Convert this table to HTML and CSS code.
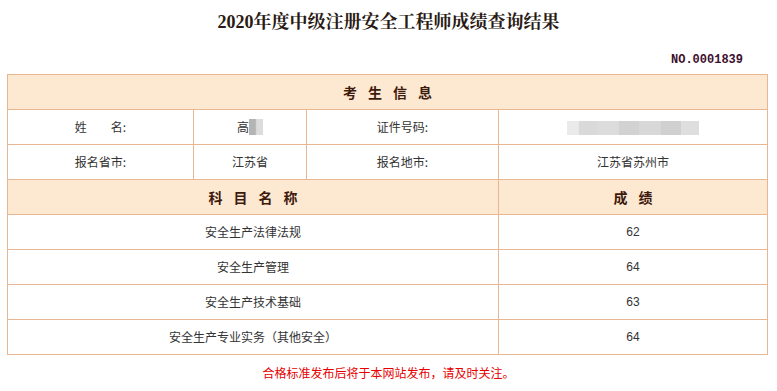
FILE: index.html
```html
<!DOCTYPE html>
<html lang="zh-CN">
<head>
<meta charset="utf-8">
<title>成绩查询结果</title>
<link rel="stylesheet" href="styles.css">
</head>
<body>
<div class="page">
  <h1 class="title">2020年度中级注册安全工程师成绩查询结果</h1>
  <div class="serial">NO.0001839</div>
  <table class="result">
    <colgroup>
      <col class="c1"><col class="c2"><col class="c3"><col class="c4">
    </colgroup>
    <tr class="head"><td colspan="4"><span class="spaced">考生信息</span></td></tr>
    <tr>
      <td><span class="label-name">姓<span class="gap"></span>名:</span></td>
      <td><span class="name">高<span class="blur-name"></span></span></td>
      <td>证件号码:</td>
      <td><span class="blur-id"><i class="b1"></i><i class="b2"></i><i class="b3"></i><i class="b4"></i><i class="b5"></i><i class="b6"></i><i class="b7"></i></span></td>
    </tr>
    <tr>
      <td>报名省市:</td>
      <td>江苏省</td>
      <td>报名地市:</td>
      <td>江苏省苏州市</td>
    </tr>
    <tr class="head">
      <td colspan="3"><span class="spaced">科目名称</span></td>
      <td><span class="spaced">成绩</span></td>
    </tr>
    <tr><td colspan="3">安全生产法律法规</td><td class="num">62</td></tr>
    <tr><td colspan="3">安全生产管理</td><td class="num">64</td></tr>
    <tr><td colspan="3">安全生产技术基础</td><td class="num">63</td></tr>
    <tr><td colspan="3">安全生产专业实务（其他安全）</td><td class="num">64</td></tr>
  </table>
  <p class="notice">合格标准发布后将于本网站发布，请及时关注。</p>
</div>
</body>
</html>
```

FILE: styles.css
```css
html, body {
  margin: 0;
  padding: 0;
  background: #ffffff;
}

.page {
  width: 777px;
  font-family: "Noto Sans CJK SC", "Noto Sans", sans-serif;
  color: #333333;
}

.title {
  margin: 10px 0 0;
  font-family: "Liberation Serif", "Noto Serif CJK SC", "Noto Sans CJK SC", serif;
  font-size: 18px;
  line-height: 24px;
  font-weight: bold;
  text-align: center;
  color: #2a1a14;
}

.serial {
  margin-top: 19px;
  padding-right: 34px;
  text-align: right;
  font-family: "Liberation Mono", monospace;
  font-weight: bold;
  font-size: 12px;
  line-height: 14px;
  color: #3e0f2e;
}

.result {
  margin: 7px 0 0 7px;
  width: 760px;
  border-collapse: collapse;
  table-layout: fixed;
  font-size: 12px;
}

.c1 { width: 186px; }
.c2 { width: 113px; }
.c3 { width: 192px; }
.c4 { width: 269px; }

.result td {
  border: 1px solid #e8b690;
  height: 34px;
  padding: 0;
  text-align: center;
  vertical-align: middle;
  line-height: 16px;
}

.result .head td {
  background: #fde8d2;
  font-size: 14px;
  font-weight: bold;
  color: #3d1a0c;
}

.spaced {
  letter-spacing: 11px;
  padding-left: 11px;
}

.num {
  font-family: "Liberation Sans", "Noto Sans", sans-serif;
  font-size: 12px;
}

.label-name {
  display: inline-flex;
  align-items: center;
}

.gap {
  display: inline-block;
  width: 24px;
}

.name {
  display: inline-flex;
  align-items: center;
}

.blur-name {
  display: inline-block;
  width: 14px;
  height: 16px;
  background: linear-gradient(90deg, #b4b4b4 0, #b4b4b4 45%, #dcdcdc 55%, #dcdcdc 100%);
}

.blur-id {
  display: inline-flex;
  vertical-align: middle;
  height: 14px;
}

.blur-id i {
  display: block;
  height: 14px;
}

.blur-id .b1 { width: 12px; background: #eaeaea; }
.blur-id .b2 { width: 18px; background: #d9d9d9; }
.blur-id .b3 { width: 22px; background: #dcdcdc; }
.blur-id .b4 { width: 20px; background: #d2d2d2; }
.blur-id .b5 { width: 22px; background: #d8d8d8; }
.blur-id .b6 { width: 20px; background: #d0d0d0; }
.blur-id .b7 { width: 18px; background: #dedede; }

.notice {
  margin: 10px 0 0;
  text-align: center;
  font-size: 12px;
  line-height: 16px;
  color: #e60000;
}
```
